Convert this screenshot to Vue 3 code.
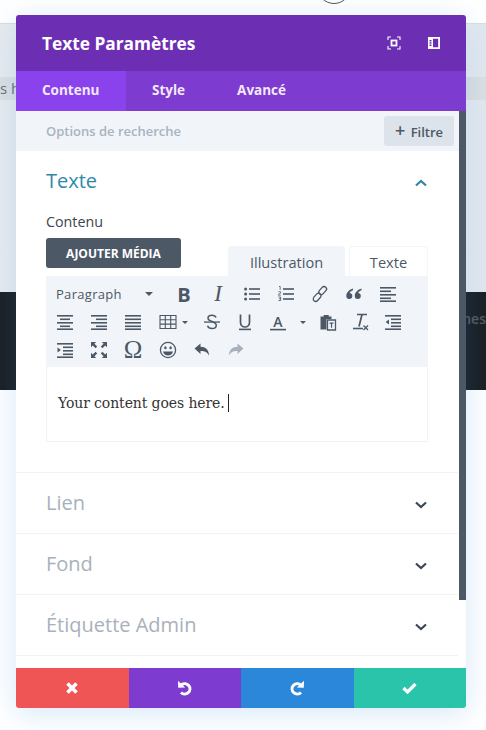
<template>
  <div class="page">
    <div class="topbar"><span class="circle"></span></div>
    <div class="grey">
      <div class="band"><span>s h</span></div>
    </div>
    <div class="dark"><span>nes</span></div>
    <div class="light"></div>

    <div class="modal">
      <div class="modal-head">
        <h2>Texte Paramètres</h2>
        <div class="head-icons">
          <svg width="14" height="14" viewBox="0 0 14 14" fill="none" stroke="#fff">
            <path d="M1 4V1h3M10 1h3v3M13 10v3h-3M4 13H1v-3" stroke-width="1.1" />
            <rect x="4.5" y="4.5" width="5" height="5" stroke-width="1.8" />
          </svg>
          <svg width="14" height="14" viewBox="0 0 14 14">
            <path fill="#fff" fill-rule="evenodd" d="M1 1h12v12H1zM6 2.8v8.4h5.2V2.8zM2.5 4v1.4h2V4zM2.5 6.3v1.4h2V6.3zM2.5 8.6V10h2V8.6z" />
          </svg>
        </div>
      </div>
      <div class="tabs">
        <div class="tab active">Contenu</div>
        <div class="tab">Style</div>
        <div class="tab">Avancé</div>
      </div>

      <div class="scrollbar"></div>

      <div class="search">
        <span>Options de recherche</span>
        <button class="filter"><b>+</b> Filtre</button>
      </div>

      <div class="body">
        <section class="group open">
          <div class="group-title">
            <span>Texte</span>
            <svg width="12" height="8" viewBox="0 0 12 8" fill="none" stroke="#2e89a8" stroke-width="2.2"><path d="M1 6.5l5-4.6 5 4.6" /></svg>
          </div>
          <label>Contenu</label>
          <div class="media-row">
            <button class="media">AJOUTER MÉDIA</button>
            <div class="editor-tabs">
              <span class="etab visual">Illustration</span>
              <span class="etab">Texte</span>
            </div>
          </div>
          <div class="toolbar">
            <div class="tb select">Paragraph<i class="caret"></i></div>
            <div v-for="item in tools" :key="item.id" class="tb" :style="{ width: item.w + 'px', gap: (item.gap || 5) + 'px' }">
              <span v-if="item.text" :class="item.cls">{{ item.text }}</span>
              <svg v-else width="18" height="18" viewBox="0 0 18 18" v-html="item.svg"></svg>
              <i v-if="item.caret" class="caret small"></i>
            </div>
          </div>
          <div class="editor">Your content goes here.<span class="cursor"></span></div>
        </section>

        <section v-for="name in closedGroups" :key="name" class="group closed">
          <div class="group-title">
            <span>{{ name }}</span>
            <svg width="12" height="8" viewBox="0 0 12 8" fill="none" stroke="#3c4654" stroke-width="2.2"><path d="M1 1.5l5 4.6 5-4.6" /></svg>
          </div>
        </section>
      </div>

      <div class="actions">
        <button class="red">
          <svg width="14" height="14" viewBox="0 0 14 14" fill="none" stroke="#fff" stroke-width="3.6"><path d="M2.5 2.5l9 9M11.5 2.5l-9 9" /></svg>
        </button>
        <button class="purple">
          <svg width="16" height="16" viewBox="0 0 16 16" fill="none" stroke="#fff" stroke-width="3">
            <path d="M4.500 4.800A5.200 5.200 0 1 1 4 12.500" />
            <path d="M1 .8l.2 7 7-.2z" fill="#fff" stroke="none" />
          </svg>
        </button>
        <button class="blue">
          <svg width="16" height="16" viewBox="0 0 16 16" fill="none" stroke="#fff" stroke-width="3">
            <path d="M11.500 4.800A5.200 5.200 0 1 0 12 12.500" />
            <path d="M15 .8l-.2 7-7-.2z" fill="#fff" stroke="none" />
          </svg>
        </button>
        <button class="teal">
          <svg width="15" height="12" viewBox="0 0 15 12" fill="none" stroke="#fff" stroke-width="3.2"><path d="M1.500 6l4 4 8-8" /></svg>
        </button>
      </div>
    </div>
  </div>
</template>

<script setup>
const closedGroups = ['Lien', 'Fond', 'Étiquette Admin']

const lines = (rows) => rows.map(([x, y, w, h = 1.6]) => `<rect x="${x}" y="${y}" width="${w}" height="${h}" fill="currentColor"/>`).join('')
const dots = '<circle cx="2.6" cy="4" r="1.5" fill="currentColor"/><circle cx="2.6" cy="9" r="1.5" fill="currentColor"/><circle cx="2.6" cy="14" r="1.5" fill="currentColor"/>'

const tools = [
  { id: 'bold', w: 34, text: 'B', cls: 'g-bold' },
  { id: 'italic', w: 34, text: 'I', cls: 'g-italic' },
  { id: 'ul', w: 34, svg: dots + lines([[6, 3.2, 11], [6, 8.2, 11], [6, 13.2, 11]]) },
  { id: 'ol', w: 34, svg: '<path d="M2 1.5h1.2v3.4M1.4 6.8h2.2v1.3l-2.2 1.4v.7h2.4M1.4 12h2.3v1.7H2.4h1.3v1.8H1.4" fill="none" stroke="currentColor" stroke-width=".8"/>' + lines([[6, 3.2, 11], [6, 8.2, 11], [6, 13.2, 11]]) },
  { id: 'link', w: 34, svg: '<g fill="none" stroke="currentColor" stroke-width="1.3"><rect x="9.2" y="1" width="5" height="9" rx="2.5" transform="rotate(42 11.7 5.5)"/><rect x="3.6" y="7.8" width="5" height="9" rx="2.5" transform="rotate(42 6.1 12.3)"/></g>' },
  { id: 'quote', w: 34, svg: '<path d="M8 3.5C4.6 4.6 1.3 7 1.3 11a3 3 0 1 0 3.2-3c.6-1 1.8-2 3.5-2.7zM16.5 3.5C13 4.6 9.8 7 9.8 11a3 3 0 1 0 3.2-3c.6-1 1.8-2 3.5-2.7z" fill="currentColor"/>' },
  { id: 'left', w: 34, svg: lines([[1, 2, 16], [1, 5.5, 11], [1, 9, 16], [1, 12.5, 11], [1, 15.4, 16]]) },
  { id: 'center', w: 34, svg: lines([[1, 2, 16], [4, 5.5, 10], [1, 9, 16], [4, 12.5, 10], [1, 15.4, 16]]) },
  { id: 'right', w: 34, svg: lines([[1, 2, 16], [6, 5.5, 11], [1, 9, 16], [6, 12.5, 11], [1, 15.4, 16]]) },
  { id: 'justify', w: 34, svg: lines([[1, 2, 16], [1, 5.5, 16], [1, 9, 16], [1, 12.5, 16], [1, 15.4, 16]]) },
  { id: 'table', w: 46, caret: true, svg: '<path d="M1 2.5h16v13H1zM1 6.8h16M1 11.1h16M6.3 2.5v13M11.7 2.5v13" fill="none" stroke="currentColor" stroke-width="1.1"/>' },
  { id: 'strike', w: 32, svg: '<path d="M13 4.6C12.4 3 10.8 2.3 9 2.3 6.7 2.3 5 3.5 5 5.3c0 3.8 8.3 2.6 8.3 7 0 2-1.9 3.3-4.3 3.3-2.1 0-3.8-.9-4.5-2.8" fill="none" stroke="currentColor" stroke-width="1.5"/>' + lines([[1, 8.4, 16, 1.3]]) },
  { id: 'under', w: 34, svg: '<path d="M4.5 1.5v8a4.5 4.5 0 0 0 9 0v-8" fill="none" stroke="currentColor" stroke-width="1.7"/>' + lines([[3, 15.6, 12, 1.6]]) },
  { id: 'color', w: 50, gap: 13, caret: true, svg: '<text x="9" y="13.5" text-anchor="middle" font-size="14" font-weight="600" font-family="Open Sans, sans-serif" fill="currentColor">A</text>' + lines([[1, 15.8, 16, 1.6]]) },
  { id: 'paste', w: 31, svg: '<path d="M1.5 3.5h3.2V2h5v1.5h2.8V6H7.5v10.5h-6z" fill="currentColor"/><path d="M8.5 7h8v10h-8z" fill="none" stroke="currentColor" stroke-width="1.3"/><path d="M10.5 9.5h4v1.2h-1.4v4h-1.2v-4h-1.4z" fill="currentColor"/>' },
  { id: 'clear', w: 33, svg: '<path d="M6 1.5h10M11 1.5l-3 12" fill="none" stroke="currentColor" stroke-width="1.7"/><path d="M2 15.5h10" stroke="currentColor" stroke-width="1.6"/><path d="M12.5 12.5l4.5 4.500M17 12.5L12.500 17" stroke="currentColor" stroke-width="1.3"/>' },
  { id: 'outdent', w: 34, svg: lines([[1, 2, 16], [7, 5.5, 10], [7, 9, 10], [7, 12.5, 10], [1, 15.4, 16]]) + '<path d="M5 6.500v5L1.600 9z" fill="currentColor"/>' },
  { id: 'indent', w: 34, svg: lines([[1, 2, 16], [7, 5.5, 10], [7, 9, 10], [7, 12.5, 10], [1, 15.4, 16]]) + '<path d="M1.500 6.500v5L4.900 9z" fill="currentColor"/>' },
  { id: 'full', w: 34, svg: '<path d="M1 1h5.200L4.400 2.800 7.200 5.600 5.600 7.200 2.800 4.400 1 6.200zM17 1v5.200l-1.800-1.800-2.800 2.800-1.600-1.600 2.800-2.800L11.800 1zM1 17v-5.200l1.800 1.800 2.800-2.800 1.600 1.600-2.800 2.800L6.200 17zM17 17h-5.200l1.800-1.800-2.800-2.800 1.600-1.600 2.800 2.800 1.800-1.800z" fill="currentColor"/>' },
  { id: 'omega', w: 34, text: 'Ω', cls: 'g-omega' },
  { id: 'smile', w: 35, svg: '<circle cx="9" cy="9" r="7.6" fill="none" stroke="currentColor" stroke-width="1.3"/><ellipse cx="6.4" cy="6.8" rx="1.2" ry="1.5" fill="currentColor"/><ellipse cx="11.6" cy="6.8" rx="1.2" ry="1.5" fill="currentColor"/><path d="M4 10.500h10c-.6 2.700-2.600 4-5 4s-4.400-1.300-5-4z" fill="currentColor"/>' },
  { id: 'undo', w: 34, svg: '<path d="M1.500 7.500 7.500 2.500v3.200c5 0 8.500 2.800 8.500 9-1.500-3.500-4-4.800-8.500-4.800v3.200z" fill="currentColor"/>' },
  { id: 'redo', w: 34, svg: '<path d="M16.500 7.500 10.500 2.500v3.200c-5 0-8.500 2.800-8.500 9 1.500-3.500 4-4.800 8.500-4.800v3.200z" fill="#a9b2bc"/>' }
]
</script>

<style>
html, body {
  margin: 0;
  background: #fff;
}
</style>

<style scoped>
.page {
  position: relative;
  width: 486px;
  height: 730px;
  overflow: hidden;
  font-family: "Open Sans", sans-serif;
}

.topbar {
  position: relative;
  height: 23px;
  background: #fff;
  border-bottom: 1px solid #d9dde1;
}

.circle {
  position: absolute;
  left: 317px;
  top: -30px;
  width: 32px;
  height: 32px;
  border: 1.5px solid #555;
  border-radius: 50%;
}

.grey {
  height: 268px;
  padding-top: 53px;
  box-sizing: border-box;
  background: linear-gradient(90deg, #e8ebee 0, #e9ecef 16px, #e9ecef 466px, #e0e7ee 486px);
}

.band {
  height: 23px;
  line-height: 23px;
  background: #dcdfe2;
  color: #6b7075;
  font-size: 15px;
}

.dark {
  display: flex;
  justify-content: flex-end;
  height: 98px;
  padding-top: 17px;
  box-sizing: border-box;
  background: #1b1f23;
  color: #54595e;
  font-size: 14px;
  font-weight: 600;
  overflow: hidden;
}

.light {
  height: 340px;
  background: #fff;
}

.modal {
  position: absolute;
  left: 16px;
  top: 15px;
  width: 450px;
  height: 693px;
  display: flex;
  flex-direction: column;
  border-radius: 3px;
  overflow: hidden;
  background: #fff;
  box-shadow: 0 5px 30px rgba(43, 135, 218, 0.2);
}

.modal-head {
  display: flex;
  align-items: center;
  justify-content: space-between;
  flex: none;
  height: 56px;
  padding: 0 25px 0 26px;
  background: #6c2eb3;
  color: #fff;
}

.modal-head h2 {
  margin: 0;
  font-size: 17.3px;
  font-weight: 700;
}

.head-icons {
  display: flex;
  gap: 26px;
}

.tabs {
  display: flex;
  flex: none;
  height: 40px;
  background: #7d3bcf;
}

.tab {
  padding: 0 26px;
  line-height: 39px;
  font-size: 13.5px;
  font-weight: 700;
  color: #f3e9fc;
}

.tab.active {
  width: 110px;
  box-sizing: border-box;
  padding-right: 0;
  background: #8a42ec;
}

.scrollbar {
  position: absolute;
  right: 0;
  top: 96px;
  width: 7px;
  height: 489px;
  background: #4c5866;
}

.search {
  display: flex;
  align-items: center;
  justify-content: space-between;
  flex: none;
  height: 40px;
  margin-right: 7px;
  padding: 0 5px 0 30px;
  background: #f1f5f9;
  color: #a9b3bf;
  font-size: 13px;
  font-weight: 600;
}

.filter {
  width: 70px;
  height: 30px;
  padding: 0;
  border: 0;
  border-radius: 3px;
  background: #dde3ea;
  color: #4c5866;
  font-family: inherit;
  font-size: 13px;
  font-weight: 600;
}

.filter b {
  font-size: 18px;
  font-weight: 600;
  margin-right: 2px;
  line-height: 1;
}

.body {
  flex: 1;
  margin-right: 8px;
}

.group {
  padding: 0 30px;
  border-bottom: 1px solid #f1f3f5;
}

.group.open {
  height: 322px;
  box-sizing: border-box;
  padding-top: 14px;
}

.group.closed {
  height: 61px;
  box-sizing: border-box;
  padding-top: 14px;
}

.group-title {
  display: flex;
  align-items: center;
  justify-content: space-between;
  height: 30px;
  padding-right: 1px;
  font-size: 20px;
  color: #a8b1bb;
}

.group-title svg {
  margin-top: 5px;
}

.open .group-title {
  color: #2e89a8;
}

label {
  display: block;
  margin-top: 17px;
  height: 20px;
  font-size: 14.3px;
  line-height: 20px;
  color: #3c4450;
}

.media-row {
  display: flex;
  justify-content: space-between;
  height: 38px;
  margin-top: 6px;
}

.media {
  width: 135px;
  height: 30px;
  padding: 0;
  border: 0;
  border-radius: 3px;
  background: #4c5866;
  color: #fff;
  font-family: inherit;
  font-size: 12px;
  font-weight: 700;
}

.editor-tabs {
  display: flex;
  gap: 4px;
  align-self: flex-end;
}

.etab {
  width: 79px;
  height: 30px;
  line-height: 31px;
  box-sizing: border-box;
  text-align: center;
  font-size: 14.6px;
  color: #4c5866;
  border: 1px solid #f3f5f8;
  border-bottom: 0;
  border-radius: 3px 3px 0 0;
}

.etab.visual {
  width: 117px;
  background: #f1f5f9;
}

.toolbar {
  display: flex;
  flex-wrap: wrap;
  align-content: flex-start;
  height: 91px;
  padding: 4px 0 0 2px;
  box-sizing: border-box;
  background: #f1f5f9;
  color: #4c5866;
}

.tb {
  display: flex;
  align-items: center;
  justify-content: center;
  height: 28px;
  width: 34px;
}

.tb.select {
  width: 119px;
  justify-content: flex-start;
  padding-left: 8px;
  box-sizing: border-box;
  font-size: 13px;
  letter-spacing: 0.3px;
}

.caret {
  width: 0;
  height: 0;
  margin-left: 23px;
  border: 4px solid transparent;
  border-top-color: #4c5866;
  border-bottom: 0;
}

.caret.small {
  margin-left: 0;
  border-width: 3.5px;
  border-bottom: 0;
}

.g-bold {
  font-family: "Open Sans", sans-serif;
  font-size: 20px;
  font-weight: 700;
}

.g-italic {
  font-family: "Liberation Serif", serif;
  font-size: 23px;
  font-style: italic;
}

.g-omega {
  font-family: "Liberation Serif", serif;
  font-size: 25px;
}

.editor {
  display: flex;
  align-items: center;
  height: 75px;
  box-sizing: border-box;
  padding: 0 0 2px 11px;
  border: 1px solid #f1f3f5;
  border-top: 0;
  font-family: "DejaVu Serif", serif;
  font-size: 14px;
  letter-spacing: -0.1px;
  color: #333;
}

.cursor {
  display: inline-block;
  width: 1px;
  height: 18px;
  margin-left: 3px;
  background: #222;
}

.actions {
  display: flex;
  flex: none;
  height: 40px;
  margin-top: auto;
}

.actions button {
  flex: 1;
  display: flex;
  align-items: center;
  justify-content: center;
  padding: 0;
  border: 0;
}

.red { background: #ef5555; }
.purple { background: #7e3bd0; }
.blue { background: #2b87da; }
.teal { background: #29c4a9; }
</style>
